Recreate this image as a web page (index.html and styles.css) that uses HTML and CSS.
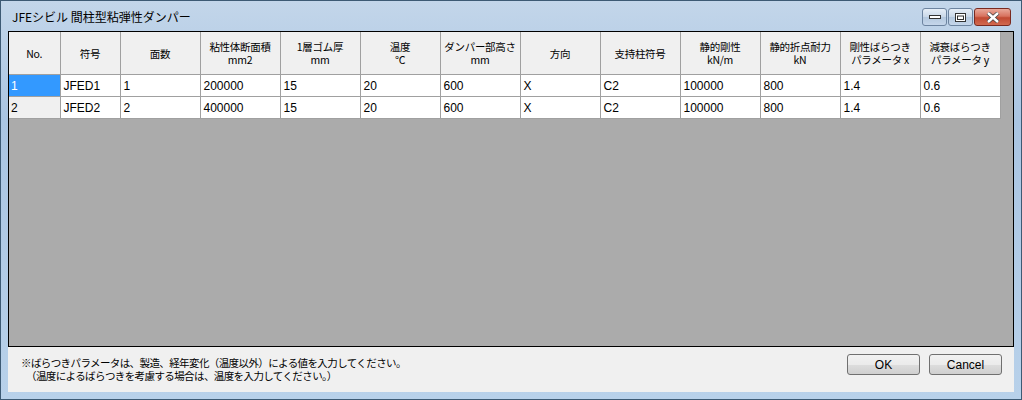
FILE: index.html
```html
<!DOCTYPE html>
<html lang="ja">

<head>
    <meta charset="UTF-8">
    <title>JFEシビル 間柱型粘弾性ダンパー</title>
    <link rel="stylesheet" href="styles.css">
</head>

<body>
    <div class="window">
        <div class="titlebar">
            <span class="title">JFEシビル 間柱型粘弾性ダンパー</span>
            <div class="caption-buttons">
                <div class="cap-btn">
                    <svg width="12" height="6" viewBox="0 0 12 6"><rect x="0.5" y="1.5" width="11" height="3" fill="#fff" stroke="#333"/></svg>
                </div>
                <div class="cap-btn">
                    <svg width="11" height="9" viewBox="0 0 11 9"><rect x="0.5" y="0.5" width="10" height="8" fill="#fff" stroke="#333"/><rect x="2.5" y="3" width="6" height="3.5" fill="none" stroke="#333"/></svg>
                </div>
                <div class="cap-btn close">
                    <svg width="14" height="11" viewBox="0 0 14 11"><path d="M2 1 L12 10 M12 1 L2 10" stroke="#444" stroke-width="4"/><path d="M2 1 L12 10 M12 1 L2 10" stroke="#fff" stroke-width="2.4"/></svg>
                </div>
            </div>
        </div>

        <div class="client">
            <div class="grid-area">
                <table class="grid">
                    <colgroup>
                        <col class="w-no">
                        <col class="w-code">
                        <col span="11" class="w-std">
                    </colgroup>
                    <thead>
                        <tr>
                            <th>No.</th>
                            <th>符号</th>
                            <th>面数</th>
                            <th><span class="hl">粘性体断面積</span><span class="hl">mm2</span></th>
                            <th><span class="hl">1層ゴム厚</span><span class="hl">mm</span></th>
                            <th><span class="hl">温度</span><span class="hl">℃</span></th>
                            <th><span class="hl">ダンパー部高さ</span><span class="hl">mm</span></th>
                            <th>方向</th>
                            <th>支持柱符号</th>
                            <th><span class="hl">静的剛性</span><span class="hl">kN/m</span></th>
                            <th><span class="hl">静的折点耐力</span><span class="hl">kN</span></th>
                            <th><span class="hl">剛性ばらつき</span><span class="hl">パラメータ x</span></th>
                            <th><span class="hl">減衰ばらつき</span><span class="hl">パラメータ y</span></th>
                        </tr>
                    </thead>
                    <tbody>
                        <tr>
                            <td class="row-head selected">1</td>
                            <td>JFED1</td>
                            <td>1</td>
                            <td>200000</td>
                            <td>15</td>
                            <td>20</td>
                            <td>600</td>
                            <td>X</td>
                            <td>C2</td>
                            <td>100000</td>
                            <td>800</td>
                            <td>1.4</td>
                            <td>0.6</td>
                        </tr>
                        <tr>
                            <td class="row-head">2</td>
                            <td>JFED2</td>
                            <td>2</td>
                            <td>400000</td>
                            <td>15</td>
                            <td>20</td>
                            <td>600</td>
                            <td>X</td>
                            <td>C2</td>
                            <td>100000</td>
                            <td>800</td>
                            <td>1.4</td>
                            <td>0.6</td>
                        </tr>
                    </tbody>
                </table>
            </div>

            <div class="footer">
                <div class="note">
                    <p>※ばらつきパラメータは、製造、経年変化（温度以外）による値を入力してください。</p>
                    <p class="indent">（温度によるばらつきを考慮する場合は、温度を入力してください。）</p>
                </div>
                <div class="buttons">
                    <button class="btn">OK</button>
                    <button class="btn">Cancel</button>
                </div>
            </div>
        </div>
    </div>
</body>

</html>
```

FILE: styles.css
```css
body {
    margin: 0;
    font-family: "Liberation Sans", "Noto Sans CJK JP", sans-serif;
    font-size: 12px;
    color: #000;
    overflow: hidden;
}

.window {
    width: 1022px;
    height: 400px;
    box-sizing: border-box;
    border: 1px solid #3d5a74;
    background: linear-gradient(to bottom, #c3d6ea 0%, #aac5e2 30%, #b8d1ea 100%);
    padding: 0 7px 7px 7px;
    display: flex;
    flex-direction: column;
}

.titlebar {
    height: 30px;
    display: flex;
    align-items: flex-start;
    justify-content: space-between;
}

.title {
    margin-top: 8px;
    margin-left: 4px;
    font-family: "Noto Sans CJK JP", sans-serif;
    font-size: 12px;
    line-height: 16px;
    color: #000;
}

.caption-buttons {
    display: flex;
    margin-top: 7px;
    margin-right: 3px;
}

.cap-btn {
    width: 25px;
    height: 18px;
    margin-left: 1px;
    box-sizing: border-box;
    border: 1px solid #6d84a0;
    border-radius: 3px;
    background: linear-gradient(to bottom, #e6eef7 0%, #cad8e8 48%, #b4c8de 52%, #c5d6ea 100%);
    display: flex;
    align-items: center;
    justify-content: center;
}

.cap-btn.close {
    width: 37px;
    border-color: #7a2a20;
    background: linear-gradient(to bottom, #e9a99a 0%, #d8735f 45%, #c14a33 55%, #d26a4f 100%);
}

.client {
    flex: 1;
    display: flex;
    flex-direction: column;
    background-color: #f0f0f0;
}

.grid-area {
    flex: 1;
    background-color: #ababab;
    border: 1px solid #000;
    overflow: hidden;
}

.grid {
    width: 991px;
    border-collapse: collapse;
    table-layout: fixed;
    font-size: 12px;
}

.w-no {
    width: 51px;
}

.w-code {
    width: 60px;
}

.w-std {
    width: 80px;
}

.grid th,
.grid td {
    border-right: 1px solid #a0a0a0;
    border-bottom: 1px solid #a0a0a0;
    padding: 0;
    overflow: hidden;
    white-space: nowrap;
}

.grid th {
    height: 42px;
    background-color: #f0f0f0;
    font-family: "Noto Sans CJK JP", sans-serif;
    font-weight: normal;
    font-size: 10.5px;
    line-height: 13px;
    letter-spacing: -0.3px;
    text-align: center;
    vertical-align: middle;
    color: #000;
}

.grid th .hl {
    display: block;
    height: 13px;
}

.grid td {
    height: 21px;
    background-color: #fff;
    padding-left: 3px;
    text-align: left;
}

.grid td.row-head {
    background-color: #f0f0f0;
    padding-left: 2px;
}

.grid td.selected {
    background-color: #3399ff;
    color: #fff;
}

.footer {
    height: 45px;
    display: flex;
    justify-content: space-between;
    align-items: flex-start;
}

.note {
    margin-top: 9px;
    margin-left: 13px;
    font-family: "Noto Sans CJK JP", sans-serif;
    font-size: 10.5px;
    line-height: 13px;
    letter-spacing: -0.6px;
}

.note p {
    margin: 0;
}

.note .indent {
    padding-left: 5px;
}

.buttons {
    display: flex;
    gap: 9px;
    margin-top: 7px;
    margin-right: 12px;
}

.btn {
    width: 73px;
    height: 21px;
    padding: 0;
    border: 1px solid #707070;
    border-radius: 3px;
    background: linear-gradient(to bottom, #f2f2f2 0%, #ebebeb 50%, #dddddd 51%, #cfcfcf 100%);
    font-family: "Liberation Sans", sans-serif;
    font-size: 12px;
    color: #000;
}
```
